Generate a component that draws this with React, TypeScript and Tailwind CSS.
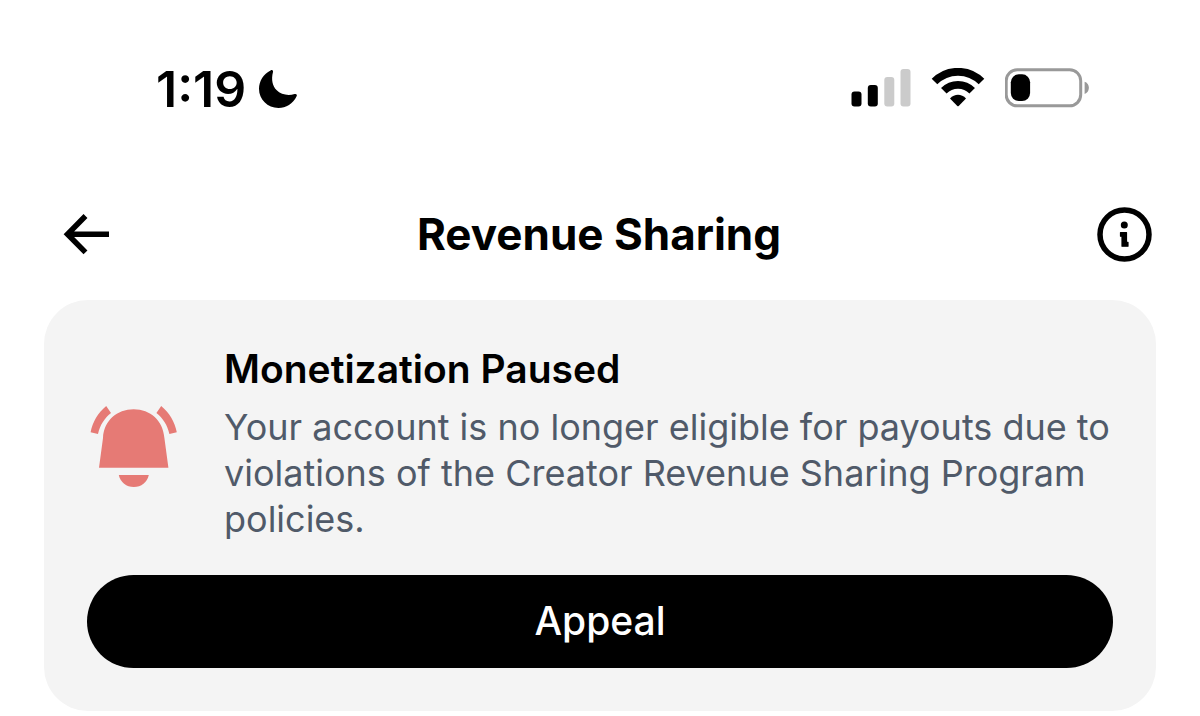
function MoonIcon() {
  return (
    <svg className="h-10 w-10" viewBox="0 0 40 40" fill="currentColor" aria-hidden="true">
      <path d="M12.6 1.4C14 .6 15.4 1.4 15 3C13 10.500 14.500 17 18.500 21C23 25.600 30 27 36.600 25C38.400 24.500 39.400 25.600 38.600 27.200C35 34.600 28 39 20.500 39C9.500 39 1 30.500 1 19.800C1 11.800 5.500 4.800 12.600 1.400Z" />
    </svg>
  );
}

function SignalIcon() {
  return (
    <svg className="h-10 w-[60px]" viewBox="0 0 60 40" aria-hidden="true">
      <rect x="0.500" y="23.500" width="10" height="15" rx="3" />
      <rect x="16.800" y="17" width="10" height="21.500" rx="3" />
      <rect x="33.300" y="9" width="10" height="29.500" rx="3" fill="#cbcbcb" />
      <rect x="49.500" y="1" width="10" height="37.500" rx="3" fill="#cbcbcb" />
    </svg>
  );
}

function WifiIcon() {
  return (
    <svg className="h-10 w-[54px]" viewBox="0 0 54 40" aria-hidden="true">
      <path d="M3.500 13.600A33 33 0 0 1 50.500 13.600" fill="none" stroke="#000" strokeWidth="7.800" />
      <path d="M12.800 22.800A20 20 0 0 1 41.200 22.800" fill="none" stroke="#000" strokeWidth="7.800" />
      <path d="M19 30.600C23.500 25.600 30.500 25.600 35 30.600L27.700 37.900Q27 38.500 26.300 37.900Z" />
    </svg>
  );
}

function BatteryIcon() {
  return (
    <svg className="h-10 w-[85px]" viewBox="0 0 85 40" aria-hidden="true">
      <rect x="1.200" y="1.800" width="74.500" height="36" rx="11" fill="none" stroke="#999" strokeWidth="3" />
      <rect x="5.800" y="6.300" width="19.300" height="26.700" rx="8" />
      <path d="M79.600 13.800C82.200 14.500 83.900 17 83.900 19.800S82.200 25.300 79.600 26Z" fill="#999" />
    </svg>
  );
}

function BackIcon() {
  return (
    <svg className="h-11 w-12" viewBox="0 0 48 44" fill="none" stroke="currentColor" strokeWidth="5.500" aria-hidden="true">
      <path d="M23.500 4L5.500 22.200L23.500 40.400M5.500 22.200H47" />
    </svg>
  );
}

function InfoIcon() {
  return (
    <svg className="h-14 w-14" viewBox="0 0 56 56" aria-hidden="true">
      <circle cx="28.500" cy="28.500" r="24.500" fill="none" stroke="#000" strokeWidth="5.500" />
      <circle cx="28.300" cy="19" r="3.500" />
      <path
        d="M24.500 26.500H30.500V36.300H32V40.200H26V30.200H24.500Z"
        stroke="#000"
        strokeWidth="1.200"
        strokeLinejoin="round"
      />
    </svg>
  );
}

function BellIcon() {
  return (
    <svg className="h-[84px] w-[88px] shrink-0" viewBox="0 0 88 84" fill="#e67a75" aria-hidden="true">
      <path d="M9 62.700L13 33C14 15.500 27 4.300 43.700 4.300C60.400 4.300 73 15.500 74.400 33L78.400 62.700Z" />
      <path d="M28.800 70H58.800C57.200 77.500 51.200 82 43.800 82S30.400 77.500 28.800 70Z" />
      <path d="M16.200 1L21 8C14.300 13.500 10 20 8 29L.6 27.300C2.600 17 8 7.800 16.200 1Z" />
      <path d="M71.200 1L66.400 8C73.100 13.500 77.400 20 79.400 29L86.800 27.300C84.800 17 79.400 7.800 71.200 1Z" />
    </svg>
  );
}

export default function App() {
  return (
    <div className="min-h-screen bg-white pb-1 font-['Inter',sans-serif] text-black">
      <div className="flex items-start justify-between pt-16 pr-[110px] pl-[156px]">
        <div className="flex h-[50px] items-center gap-3">
          <time className="text-[50px] leading-[50px] font-semibold">1:19</time>
          <MoonIcon />
        </div>
        <div className="flex h-12 items-center gap-5">
          <SignalIcon />
          <WifiIcon />
          <BatteryIcon />
        </div>
      </div>

      <header className="mt-[92px] flex h-14 items-center justify-between px-12">
        <button type="button" aria-label="Back" className="flex w-[62px] justify-end">
          <BackIcon />
        </button>
        <h1 className="text-[44px] leading-[56px] font-bold">Revenue Sharing</h1>
        <button type="button" aria-label="Information" className="flex w-16 justify-end">
          <InfoIcon />
        </button>
      </header>

      <main className="mx-11 mt-[38px] rounded-[44px] bg-[#f4f4f4] px-[43px] pt-11 pb-[43px]">
        <div className="flex items-center gap-[46px] pl-[3px]">
          <div className="pt-2">
            <BellIcon />
          </div>
          <div className="flex-1">
            <h2 className="text-[39px] leading-[50px] font-semibold">Monetization Paused</h2>
            <p className="mt-[10px] text-[36px] leading-[46px] text-[#505a69]">
              Your account is no longer eligible for payouts due to violations of the Creator Revenue Sharing Program
              policies.
            </p>
          </div>
        </div>
        <button
          type="button"
          className="mt-[33px] flex h-[93px] w-full items-center justify-center rounded-full bg-black text-[39px] font-medium text-white"
        >
          Appeal
        </button>
      </main>
    </div>
  );
}
